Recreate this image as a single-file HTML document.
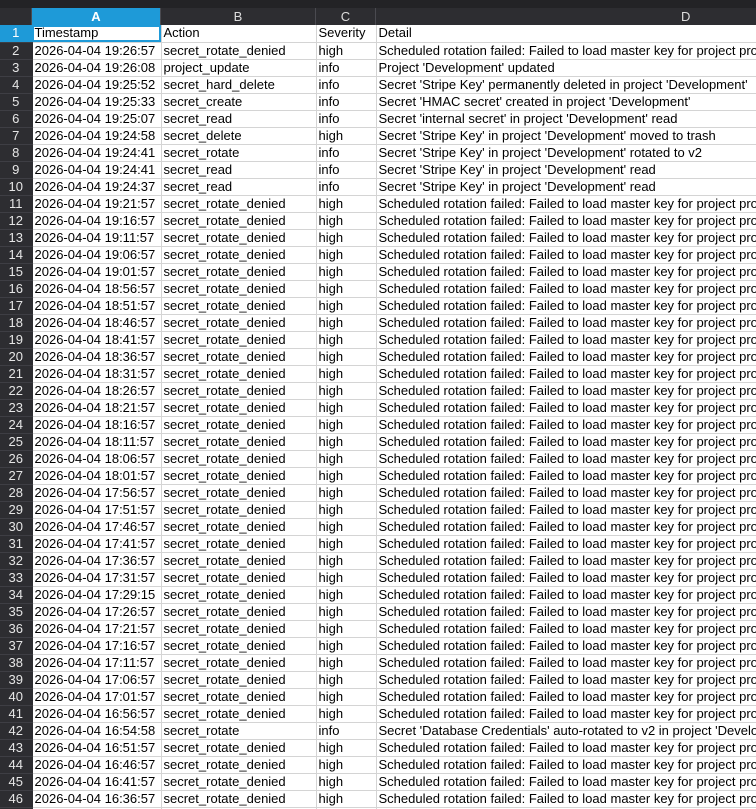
<!DOCTYPE html>
<html><head><meta charset="utf-8"><style>
html,body{margin:0;padding:0;background:#fff;width:756px;height:809px;overflow:hidden}
body{font-family:"Liberation Sans",sans-serif;font-size:13px;color:#000;position:relative}
#top{position:absolute;left:0;top:0;width:756px;height:8px;background:#232326}
#hdr{position:absolute;left:0;top:8px;width:756px;height:17px;background:#2d2d31;color:#ddd;overflow:hidden}
.h{position:absolute;top:0;height:17px;line-height:17px;text-align:center;border-right:1px solid #4a4a50;box-sizing:border-box}
table{position:absolute;left:0;top:25px;border-collapse:collapse;table-layout:fixed;width:756px}
td{height:16px;padding:0 0 0 2px;border-right:1px solid #d4d4d4;border-bottom:1px solid #d4d4d4;white-space:nowrap;overflow:hidden;line-height:16px;box-sizing:border-box}
td.r{background:#2d2d31;color:#e6e6e6;text-align:center;padding:0;border-right:1px solid #2d2d31;border-bottom:1px solid #3e3e44}
tr{height:17px}
</style></head><body>
<div id="top"></div>
<div id="hdr">
<div class="h" style="left:0;width:32px"></div>
<div class="h" style="left:32px;width:129px;background:#1e9ad8;color:#fff;font-weight:bold">A</div>
<div class="h" style="left:161px;width:155px">B</div>
<div class="h" style="left:316px;width:60px">C</div>
<div class="h" style="left:376px;width:380px;text-align:left;padding-left:305px;border:none">D</div>
</div>
<table>
<colgroup><col style="width:32px"><col style="width:129px"><col style="width:155px"><col style="width:60px"><col style="width:380px"></colgroup>
<tr><td class="r" style="background:#1e9ad8;color:#fff">1</td><td style="outline:2px solid #1e9ad8;outline-offset:-2px">Timestamp</td><td>Action</td><td>Severity</td><td>Detail</td></tr>
<tr><td class="r">2</td><td>2026-04-04 19:26:57</td><td>secret_rotate_denied</td><td>high</td><td>Scheduled rotation failed: Failed to load master key for project proj</td></tr>
<tr><td class="r">3</td><td>2026-04-04 19:26:08</td><td>project_update</td><td>info</td><td>Project 'Development' updated</td></tr>
<tr><td class="r">4</td><td>2026-04-04 19:25:52</td><td>secret_hard_delete</td><td>info</td><td>Secret 'Stripe Key' permanently deleted in project 'Development'</td></tr>
<tr><td class="r">5</td><td>2026-04-04 19:25:33</td><td>secret_create</td><td>info</td><td>Secret 'HMAC secret' created in project 'Development'</td></tr>
<tr><td class="r">6</td><td>2026-04-04 19:25:07</td><td>secret_read</td><td>info</td><td>Secret 'internal secret' in project 'Development' read</td></tr>
<tr><td class="r">7</td><td>2026-04-04 19:24:58</td><td>secret_delete</td><td>high</td><td>Secret 'Stripe Key' in project 'Development' moved to trash</td></tr>
<tr><td class="r">8</td><td>2026-04-04 19:24:41</td><td>secret_rotate</td><td>info</td><td>Secret 'Stripe Key' in project 'Development' rotated to v2</td></tr>
<tr><td class="r">9</td><td>2026-04-04 19:24:41</td><td>secret_read</td><td>info</td><td>Secret 'Stripe Key' in project 'Development' read</td></tr>
<tr><td class="r">10</td><td>2026-04-04 19:24:37</td><td>secret_read</td><td>info</td><td>Secret 'Stripe Key' in project 'Development' read</td></tr>
<tr><td class="r">11</td><td>2026-04-04 19:21:57</td><td>secret_rotate_denied</td><td>high</td><td>Scheduled rotation failed: Failed to load master key for project proj</td></tr>
<tr><td class="r">12</td><td>2026-04-04 19:16:57</td><td>secret_rotate_denied</td><td>high</td><td>Scheduled rotation failed: Failed to load master key for project proj</td></tr>
<tr><td class="r">13</td><td>2026-04-04 19:11:57</td><td>secret_rotate_denied</td><td>high</td><td>Scheduled rotation failed: Failed to load master key for project proj</td></tr>
<tr><td class="r">14</td><td>2026-04-04 19:06:57</td><td>secret_rotate_denied</td><td>high</td><td>Scheduled rotation failed: Failed to load master key for project proj</td></tr>
<tr><td class="r">15</td><td>2026-04-04 19:01:57</td><td>secret_rotate_denied</td><td>high</td><td>Scheduled rotation failed: Failed to load master key for project proj</td></tr>
<tr><td class="r">16</td><td>2026-04-04 18:56:57</td><td>secret_rotate_denied</td><td>high</td><td>Scheduled rotation failed: Failed to load master key for project proj</td></tr>
<tr><td class="r">17</td><td>2026-04-04 18:51:57</td><td>secret_rotate_denied</td><td>high</td><td>Scheduled rotation failed: Failed to load master key for project proj</td></tr>
<tr><td class="r">18</td><td>2026-04-04 18:46:57</td><td>secret_rotate_denied</td><td>high</td><td>Scheduled rotation failed: Failed to load master key for project proj</td></tr>
<tr><td class="r">19</td><td>2026-04-04 18:41:57</td><td>secret_rotate_denied</td><td>high</td><td>Scheduled rotation failed: Failed to load master key for project proj</td></tr>
<tr><td class="r">20</td><td>2026-04-04 18:36:57</td><td>secret_rotate_denied</td><td>high</td><td>Scheduled rotation failed: Failed to load master key for project proj</td></tr>
<tr><td class="r">21</td><td>2026-04-04 18:31:57</td><td>secret_rotate_denied</td><td>high</td><td>Scheduled rotation failed: Failed to load master key for project proj</td></tr>
<tr><td class="r">22</td><td>2026-04-04 18:26:57</td><td>secret_rotate_denied</td><td>high</td><td>Scheduled rotation failed: Failed to load master key for project proj</td></tr>
<tr><td class="r">23</td><td>2026-04-04 18:21:57</td><td>secret_rotate_denied</td><td>high</td><td>Scheduled rotation failed: Failed to load master key for project proj</td></tr>
<tr><td class="r">24</td><td>2026-04-04 18:16:57</td><td>secret_rotate_denied</td><td>high</td><td>Scheduled rotation failed: Failed to load master key for project proj</td></tr>
<tr><td class="r">25</td><td>2026-04-04 18:11:57</td><td>secret_rotate_denied</td><td>high</td><td>Scheduled rotation failed: Failed to load master key for project proj</td></tr>
<tr><td class="r">26</td><td>2026-04-04 18:06:57</td><td>secret_rotate_denied</td><td>high</td><td>Scheduled rotation failed: Failed to load master key for project proj</td></tr>
<tr><td class="r">27</td><td>2026-04-04 18:01:57</td><td>secret_rotate_denied</td><td>high</td><td>Scheduled rotation failed: Failed to load master key for project proj</td></tr>
<tr><td class="r">28</td><td>2026-04-04 17:56:57</td><td>secret_rotate_denied</td><td>high</td><td>Scheduled rotation failed: Failed to load master key for project proj</td></tr>
<tr><td class="r">29</td><td>2026-04-04 17:51:57</td><td>secret_rotate_denied</td><td>high</td><td>Scheduled rotation failed: Failed to load master key for project proj</td></tr>
<tr><td class="r">30</td><td>2026-04-04 17:46:57</td><td>secret_rotate_denied</td><td>high</td><td>Scheduled rotation failed: Failed to load master key for project proj</td></tr>
<tr><td class="r">31</td><td>2026-04-04 17:41:57</td><td>secret_rotate_denied</td><td>high</td><td>Scheduled rotation failed: Failed to load master key for project proj</td></tr>
<tr><td class="r">32</td><td>2026-04-04 17:36:57</td><td>secret_rotate_denied</td><td>high</td><td>Scheduled rotation failed: Failed to load master key for project proj</td></tr>
<tr><td class="r">33</td><td>2026-04-04 17:31:57</td><td>secret_rotate_denied</td><td>high</td><td>Scheduled rotation failed: Failed to load master key for project proj</td></tr>
<tr><td class="r">34</td><td>2026-04-04 17:29:15</td><td>secret_rotate_denied</td><td>high</td><td>Scheduled rotation failed: Failed to load master key for project proj</td></tr>
<tr><td class="r">35</td><td>2026-04-04 17:26:57</td><td>secret_rotate_denied</td><td>high</td><td>Scheduled rotation failed: Failed to load master key for project proj</td></tr>
<tr><td class="r">36</td><td>2026-04-04 17:21:57</td><td>secret_rotate_denied</td><td>high</td><td>Scheduled rotation failed: Failed to load master key for project proj</td></tr>
<tr><td class="r">37</td><td>2026-04-04 17:16:57</td><td>secret_rotate_denied</td><td>high</td><td>Scheduled rotation failed: Failed to load master key for project proj</td></tr>
<tr><td class="r">38</td><td>2026-04-04 17:11:57</td><td>secret_rotate_denied</td><td>high</td><td>Scheduled rotation failed: Failed to load master key for project proj</td></tr>
<tr><td class="r">39</td><td>2026-04-04 17:06:57</td><td>secret_rotate_denied</td><td>high</td><td>Scheduled rotation failed: Failed to load master key for project proj</td></tr>
<tr><td class="r">40</td><td>2026-04-04 17:01:57</td><td>secret_rotate_denied</td><td>high</td><td>Scheduled rotation failed: Failed to load master key for project proj</td></tr>
<tr><td class="r">41</td><td>2026-04-04 16:56:57</td><td>secret_rotate_denied</td><td>high</td><td>Scheduled rotation failed: Failed to load master key for project proj</td></tr>
<tr><td class="r">42</td><td>2026-04-04 16:54:58</td><td>secret_rotate</td><td>info</td><td>Secret 'Database Credentials' auto-rotated to v2 in project 'Development'</td></tr>
<tr><td class="r">43</td><td>2026-04-04 16:51:57</td><td>secret_rotate_denied</td><td>high</td><td>Scheduled rotation failed: Failed to load master key for project proj</td></tr>
<tr><td class="r">44</td><td>2026-04-04 16:46:57</td><td>secret_rotate_denied</td><td>high</td><td>Scheduled rotation failed: Failed to load master key for project proj</td></tr>
<tr><td class="r">45</td><td>2026-04-04 16:41:57</td><td>secret_rotate_denied</td><td>high</td><td>Scheduled rotation failed: Failed to load master key for project proj</td></tr>
<tr><td class="r">46</td><td>2026-04-04 16:36:57</td><td>secret_rotate_denied</td><td>high</td><td>Scheduled rotation failed: Failed to load master key for project proj</td></tr>
<tr><td class="r"></td><td></td><td></td><td></td><td></td></tr>
</table>
</body></html>
